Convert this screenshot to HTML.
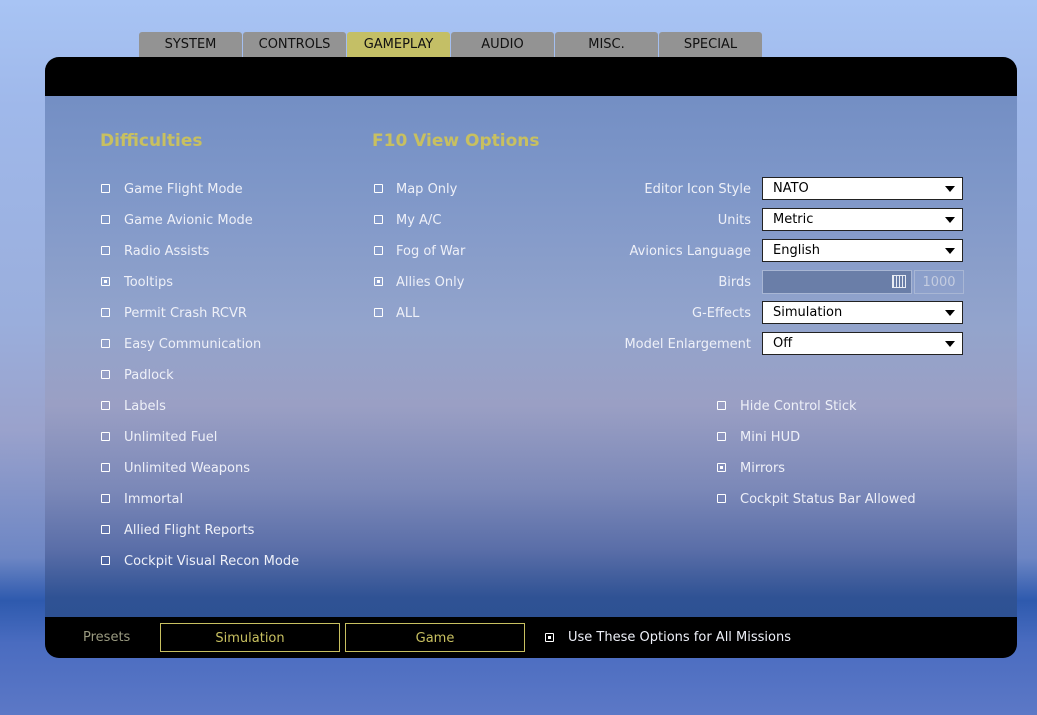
<!DOCTYPE html>
<html><head><style>
*{margin:0;padding:0;box-sizing:border-box}
body{width:1037px;height:715px;overflow:hidden;position:relative;font-family:"DejaVu Sans","Liberation Sans",sans-serif;
background:linear-gradient(180deg,#a8c4f4 0%,#9fb8ea 15%,#9aaedc 45%,#9aa2cc 60%,#6d86c4 78%,#2e5aae 84%,#4a6cc0 90%,#5c78c6 100%);}
.panel{position:absolute;left:45px;top:57px;width:972px;height:601px;border-radius:14px;overflow:hidden;
background:linear-gradient(180deg,#6f8bc2 0%,#7d96c8 20%,#93a4cc 45%,#9a9fc4 58%,#7b88b8 72%,#5a6ea8 82%,#2f5294 90%,#2c4f90 100%);}
.top{position:absolute;left:0;top:0;width:972px;height:39px;background:#000}
.bot{position:absolute;left:0;bottom:0;width:972px;height:41px;background:#000}
.tab{position:absolute;top:32px;height:25px;width:103px;background:#939393;border-radius:3px 3px 0 0;color:#111;font-size:13px;text-align:center;line-height:25px}
.tab.a{background:#c4bf66}
.t{position:absolute;color:#eef0f8;font-size:13px;line-height:16px;white-space:nowrap}
.cb{position:absolute;width:9px;height:9px;border:1.5px solid #fff;border-radius:1px}
.cb.on::after{content:"";position:absolute;left:1.5px;top:1.5px;width:3px;height:3px;background:#fff}
h2{position:absolute;color:#c8c060;font-size:17px;font-weight:bold;top:131px}
.lab{position:absolute;right:286px;color:#eef0f8;font-size:13px;text-align:right}
.dd{position:absolute;left:762px;width:201px;height:23px;background:#fff;border:1px solid #222;font-size:13px;color:#000;padding-left:10px;line-height:22px}
.dd::after{content:"";position:absolute;right:7px;top:8px;border-left:5px solid transparent;border-right:5px solid transparent;border-top:6px solid #000}
.btn{position:absolute;top:623px;height:29px;width:180px;border:1px solid #c8c060;color:#c8c060;font-size:13px;text-align:center;line-height:29px}
</style></head><body>
<div class="tab" style="left:139px">SYSTEM</div>
<div class="tab" style="left:243px">CONTROLS</div>
<div class="tab a" style="left:347px">GAMEPLAY</div>
<div class="tab" style="left:451px">AUDIO</div>
<div class="tab" style="left:555px">MISC.</div>
<div class="tab" style="left:659px">SPECIAL</div>
<div class="panel"><div class="top"></div><div class="bot"></div></div>
<h2 style="left:100px">Difficulties</h2>
<h2 style="left:372px">F10 View Options</h2>

<div class="cb" style="left:101px;top:184px"></div><div class="t" style="left:124px;top:182px">Game Flight Mode</div>
<div class="cb" style="left:101px;top:215px"></div><div class="t" style="left:124px;top:213px">Game Avionic Mode</div>
<div class="cb" style="left:101px;top:246px"></div><div class="t" style="left:124px;top:244px">Radio Assists</div>
<div class="cb on" style="left:101px;top:277px"></div><div class="t" style="left:124px;top:275px">Tooltips</div>
<div class="cb" style="left:101px;top:308px"></div><div class="t" style="left:124px;top:306px">Permit Crash RCVR</div>
<div class="cb" style="left:101px;top:339px"></div><div class="t" style="left:124px;top:337px">Easy Communication</div>
<div class="cb" style="left:101px;top:370px"></div><div class="t" style="left:124px;top:368px">Padlock</div>
<div class="cb" style="left:101px;top:401px"></div><div class="t" style="left:124px;top:399px">Labels</div>
<div class="cb" style="left:101px;top:432px"></div><div class="t" style="left:124px;top:430px">Unlimited Fuel</div>
<div class="cb" style="left:101px;top:463px"></div><div class="t" style="left:124px;top:461px">Unlimited Weapons</div>
<div class="cb" style="left:101px;top:494px"></div><div class="t" style="left:124px;top:492px">Immortal</div>
<div class="cb" style="left:101px;top:525px"></div><div class="t" style="left:124px;top:523px">Allied Flight Reports</div>
<div class="cb" style="left:101px;top:556px"></div><div class="t" style="left:124px;top:554px">Cockpit Visual Recon Mode</div>

<div class="cb" style="left:374px;top:184px"></div><div class="t" style="left:396px;top:182px">Map Only</div>
<div class="cb" style="left:374px;top:215px"></div><div class="t" style="left:396px;top:213px">My A/C</div>
<div class="cb" style="left:374px;top:246px"></div><div class="t" style="left:396px;top:244px">Fog of War</div>
<div class="cb on" style="left:374px;top:277px"></div><div class="t" style="left:396px;top:275px">Allies Only</div>
<div class="cb" style="left:374px;top:308px"></div><div class="t" style="left:396px;top:306px">ALL</div>

<div class="lab" style="top:182px">Editor Icon Style</div><div class="dd" style="top:177px">NATO</div>
<div class="lab" style="top:213px">Units</div><div class="dd" style="top:208px">Metric</div>
<div class="lab" style="top:244px">Avionics Language</div><div class="dd" style="top:239px">English</div>
<div class="lab" style="top:275px">Birds</div>
<div style="position:absolute;left:762px;top:270px;width:150px;height:24px;background:#6a7ea8;border:1px solid #a8b6d4"></div>
<div style="position:absolute;left:892px;top:275px;width:14px;height:13px;border:1px solid #e8ecf4;background:repeating-linear-gradient(90deg,#e8ecf4 0 1px,transparent 1px 3px)"></div>
<div style="position:absolute;left:914px;top:270px;width:50px;height:24px;border:1px solid #a8b6d4;color:#c4cce0;font-size:13px;text-align:center;line-height:23px">1000</div>
<div class="lab" style="top:306px">G-Effects</div><div class="dd" style="top:301px">Simulation</div>
<div class="lab" style="top:337px">Model Enlargement</div><div class="dd" style="top:332px">Off</div>

<div class="cb" style="left:717px;top:401px"></div><div class="t" style="left:740px;top:399px">Hide Control Stick</div>
<div class="cb" style="left:717px;top:432px"></div><div class="t" style="left:740px;top:430px">Mini HUD</div>
<div class="cb on" style="left:717px;top:463px"></div><div class="t" style="left:740px;top:461px">Mirrors</div>
<div class="cb" style="left:717px;top:494px"></div><div class="t" style="left:740px;top:492px">Cockpit Status Bar Allowed</div>

<div class="t" style="left:83px;top:630px;color:#9a9a80">Presets</div>
<div class="btn" style="left:160px">Simulation</div>
<div class="btn" style="left:345px">Game</div>
<div class="cb on" style="left:545px;top:633px"></div><div class="t" style="left:568px;top:630px">Use These Options for All Missions</div>
</body></html>
